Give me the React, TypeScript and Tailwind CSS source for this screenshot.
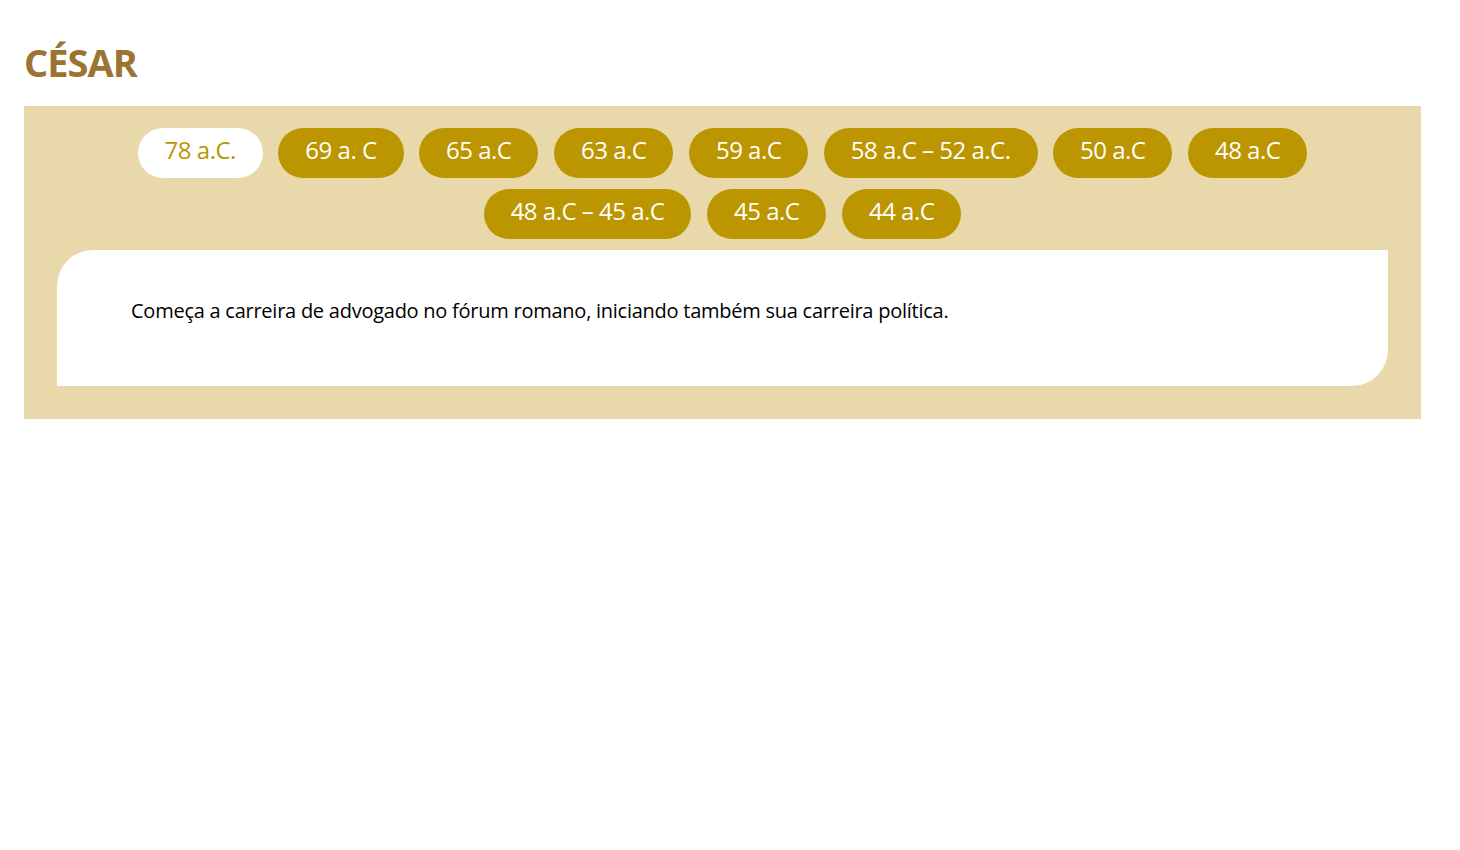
import { useState } from "react"

const periods = [
  { label: "78 a.C.", text: "Começa a carreira de advogado no fórum romano, iniciando também sua carreira política." },
  { label: "69 a. C", text: "" },
  { label: "65 a.C", text: "" },
  { label: "63 a.C", text: "" },
  { label: "59 a.C", text: "" },
  { label: "58 a.C – 52 a.C.", text: "" },
  { label: "50 a.C", text: "" },
  { label: "48 a.C", text: "" },
  { label: "48 a.C – 45 a.C", text: "" },
  { label: "45 a.C", text: "" },
  { label: "44 a.C", text: "" },
]

export default function App() {
  const [active, setActive] = useState(0)

  return (
    <div className="min-h-screen bg-white pl-6 pr-[39px] pt-[38px] font-['Open_Sans',sans-serif]">
      <h1 className="text-[38px] font-bold leading-[48px] tracking-[-1px] text-[#9a7430] mb-5">CÉSAR</h1>
      <section className="bg-[#e8d8aa] px-[33px] pt-[22px] pb-[33px]">
        <div className="flex flex-wrap justify-center gap-x-[15.5px] gap-y-[11px]">
          {periods.map((p, i) => (
            <button
              key={p.label}
              onClick={() => setActive(i)}
              className={
                "h-[50px] rounded-full px-[27px] pb-[6px] text-[24px] leading-none tracking-[-0.5px] " +
                (i === active ? "bg-white text-[#bb9600]" : "bg-[#bb9600] text-white")
              }
            >
              {p.label}
            </button>
          ))}
        </div>
        <div className="mt-[11px] h-[136px] bg-white rounded-tl-[36px] rounded-br-[36px] pl-[74px] pt-[46px]">
          <p className="text-[20px] text-black tracking-[-0.25px]">{periods[active].text}</p>
        </div>
      </section>
    </div>
  )
}
